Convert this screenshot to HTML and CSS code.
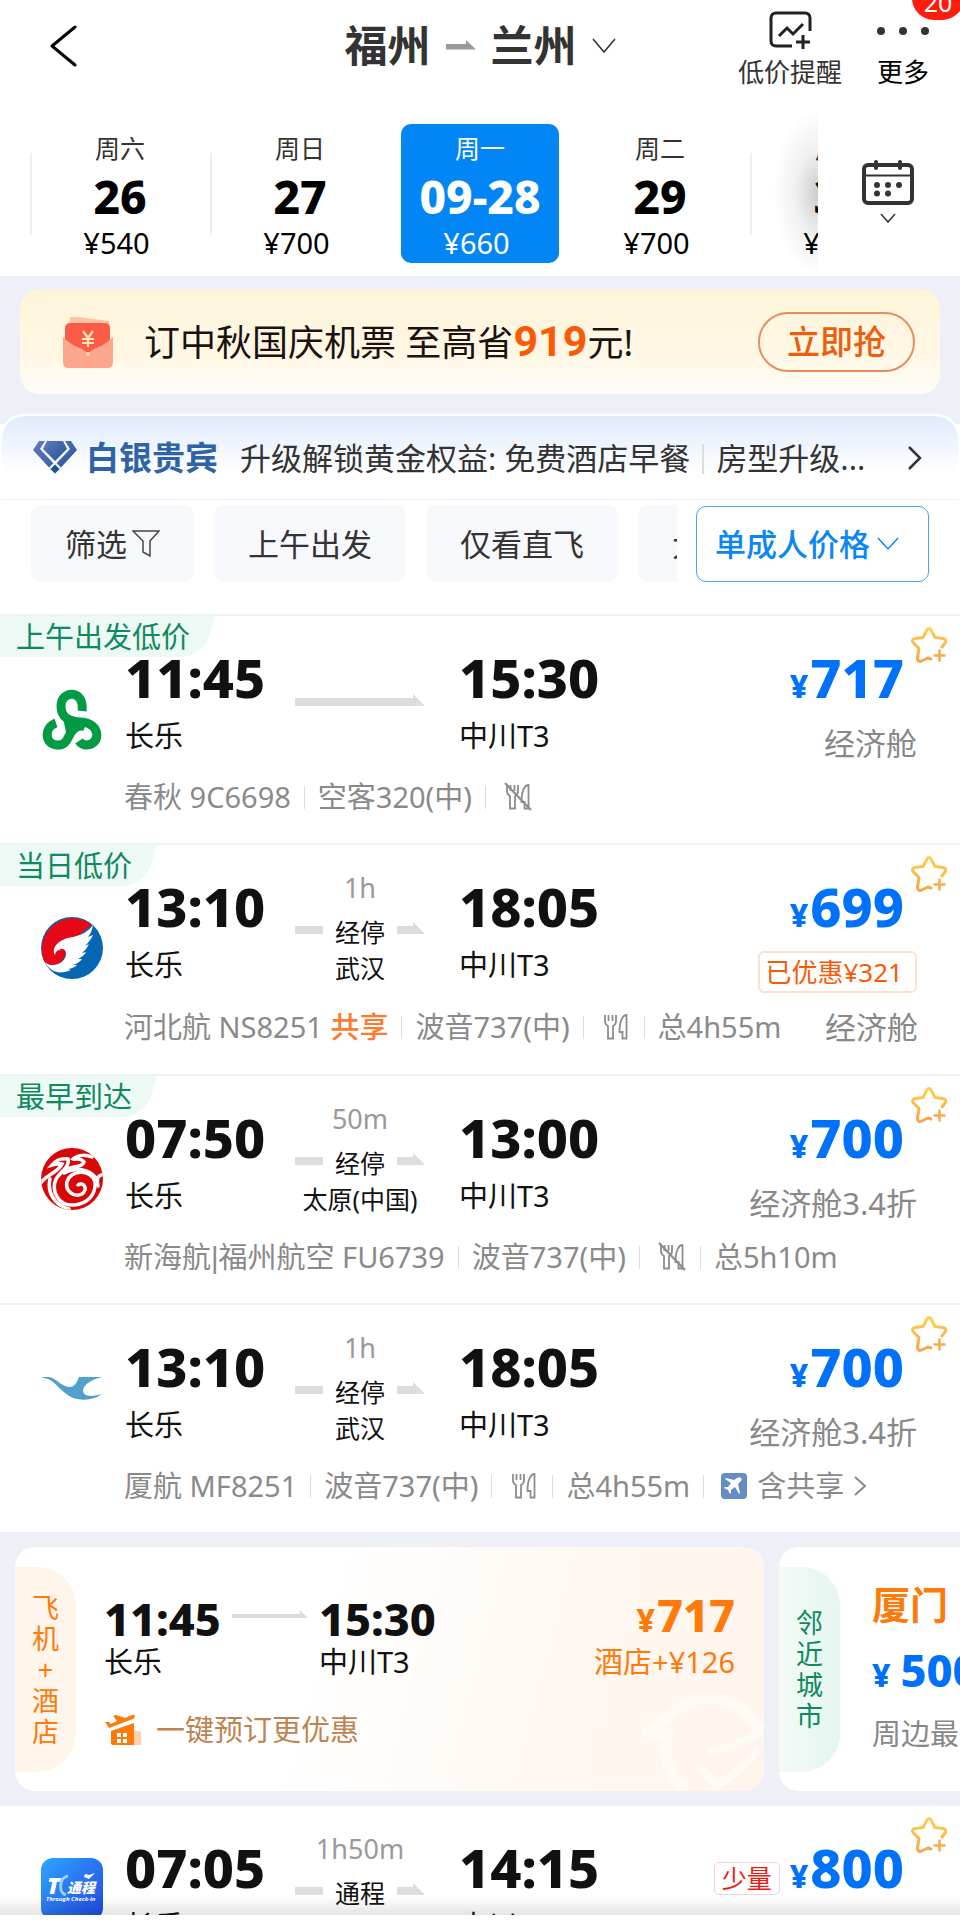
FILE: index.html
```html
<!DOCTYPE html>
<html lang="zh-CN">
<head>
    <meta charset="UTF-8">
    <meta name="viewport" content="width=device-width, initial-scale=1.0">
    <title>福州 - 兰州 机票</title>
    <link rel="stylesheet" href="styles.css">
</head>
<body>
    <!-- 公用图标 -->
    <svg class="symbols" aria-hidden="true">
        <defs>
            <linearGradient id="gold" x1="0" y1="0" x2="0" y2="1">
                <stop offset="0" stop-color="#fdd04f"/>
                <stop offset="1" stop-color="#f9a548"/>
            </linearGradient>
        </defs>
        <symbol id="icon-star" viewBox="0 0 36 36">
            <path d="M31 20l3-4c2-3 0-4-2-4.500l-8-1L20 3c-1-2-3-2-4 0l-4 7.500-8 1c-3 .5-3 3-1.500 4.500L8 21.500 6.500 31c0 3 2 4 4 3l6.500-3 3 1" fill="none" stroke="url(#gold)" stroke-width="3" stroke-linecap="round" stroke-linejoin="round"/>
            <path d="M28.500 22.500v12M22.500 28.500h12" stroke="#f9ab48" stroke-width="2.500"/>
        </symbol>
        <symbol id="icon-meal" viewBox="0 0 34 34">
            <path d="M8 5v6c0 3 1 4 3 5v12.500h5V16c2-1 3-2 3-5V5M11.500 5v6M15.500 5v6" fill="none" stroke="#8d8d8d" stroke-width="1.800"/>
            <path d="M29.500 28.500V5c-3 0-7 4-7 17h3v6.500z" fill="none" stroke="#8d8d8d" stroke-width="1.800"/>
        </symbol>
        <symbol id="icon-no-meal" viewBox="0 0 34 34">
            <use href="#icon-meal"/>
            <path d="M6 3l26 27" stroke="#8d8d8d" stroke-width="2.200"/>
        </symbol>
    </svg>

    <!-- 顶部航线 -->
    <header class="header">
        <button class="back" aria-label="返回">
            <svg width="28" height="44" viewBox="0 0 28 44" fill="none" stroke="#000" stroke-width="3" stroke-linecap="round" stroke-linejoin="round"><path d="M25 3L2 22l23 19"/></svg>
        </button>
        <h1 class="route">
            <button class="route-btn">
                <span>福州</span>
                <svg width="30" height="12" viewBox="0 0 30 12"><path d="M0 4h20V0l10 9.500H0z" fill="#9a9a9a"/></svg>
                <span>兰州</span>
                <svg width="24" height="16" viewBox="0 0 24 16" fill="none" stroke="#333" stroke-width="1.600"><path d="M1 1l11 13L23 1"/></svg>
            </button>
        </h1>
        <div class="actions">
            <button class="action">
                <svg width="44" height="40" viewBox="0 0 44 40" fill="none" stroke="#222" stroke-width="3">
                    <path d="M24 35H8c-3 0-5-2-5-5V7c0-3 2-5 5-5h29c3 0 5 2 5 5v13"/>
                    <path d="M11 25l8-8 6 6 10-10"/>
                    <path d="M35 24v14M28 31h14"/>
                </svg>
                <span>低价提醒</span>
            </button>
            <button class="action more">
                <svg width="54" height="40" viewBox="0 0 54 40" fill="#333"><circle cx="5" cy="20" r="4"/><circle cx="27" cy="20" r="4"/><circle cx="49" cy="20" r="4"/></svg>
                <span>更多</span>
                <em class="badge">20</em>
            </button>
        </div>
    </header>

    <!-- 日期选择 -->
    <nav class="dates">
        <div class="date-list">
            <button class="date"><span>周六</span><b>26</b><span class="fare">¥540</span></button>
            <button class="date"><span>周日</span><b>27</b><span class="fare">¥700</span></button>
            <button class="date active"><span>周一</span><b>09-28</b><span class="fare">¥660</span></button>
            <button class="date no-line"><span>周二</span><b>29</b><span class="fare">¥700</span></button>
            <button class="date"><span>周三</span><b>30</b><span class="fare">¥700</span></button>
        </div>
        <button class="calendar" aria-label="日历">
            <svg width="52" height="64" viewBox="0 0 52 64" fill="none" stroke="#333">
                <rect x="2" y="5" width="48" height="38" rx="4" stroke-width="4"/>
                <path d="M2 15.500h48" stroke-width="2"/>
                <path d="M14 2v6M38 2v6" stroke-width="4" stroke-linecap="round"/>
                <g fill="#333" stroke="none"><circle cx="15" cy="25" r="3"/><circle cx="26" cy="25" r="3"/><circle cx="37" cy="25" r="3"/><circle cx="15" cy="33.500" r="3"/><circle cx="26" cy="33.500" r="3"/></g>
                <path d="M19 54l7 8 7-8" stroke-width="1.500"/>
            </svg>
        </button>
    </nav>

    <!-- 活动横幅 -->
    <section class="promo">
        <div class="banner">
            <svg class="envelope" width="54" height="54" viewBox="0 0 54 54">
                <path d="M9 2h8l31 4v12H8z" fill="#fbc2a8"/>
                <rect x="4" y="8" width="45" height="36" rx="5" fill="#fb5b47"/>
                <path d="M2 22q25 25 50 0v25q0 6-6 6H8q-6 0-6-6z" fill="#fca68e"/>
                <path d="M4 23l23 15 22-15" fill="#fb5b47"/>
                <circle cx="27" cy="39" r="2" fill="#ffd9a0"/>
                <path d="M22 16l5 7 5-7M27 23v9M21 24h12M21 28h12" fill="none" stroke="#ffe7b5" stroke-width="2.200"/>
            </svg>
            <p class="banner-text">订中秋国庆机票 至高省<b>919</b>元!</p>
            <button class="grab">立即抢</button>
        </div>
    </section>

    <!-- 会员权益 -->
    <a class="member" href="#">
        <svg width="46" height="36" viewBox="0 0 46 36">
            <defs><linearGradient id="gem" x1="0" y1="0" x2="1" y2="1"><stop offset="0" stop-color="#6679c4"/><stop offset="1" stop-color="#22518f"/></linearGradient></defs>
            <path d="M15 1h16l4 8-12 12L11 9z" fill="url(#gem)"/>
            <path d="M7 1h6L8 9l15 16L38 9l-5-8h6l6 9-22 24L1 10z" fill="url(#gem)"/>
            <path d="M23 23l6 6-6 6-6-6z" fill="#22518f" stroke="#f2f7ff" stroke-width="2"/>
        </svg>
        <strong>白银贵宾</strong>
        <span class="member-text">升级解锁黄金权益: 免费酒店早餐<i></i>房型升级...</span>
        <svg width="14" height="24" viewBox="0 0 14 24" fill="none" stroke="#333" stroke-width="2.500"><path d="M1 1l11 11L1 23"/></svg>
    </a>

    <!-- 筛选 -->
    <div class="filters">
        <div class="filter-list">
            <button class="filter">筛选
                <svg width="28" height="28" viewBox="0 0 28 28" fill="none" stroke="#444" stroke-width="1.500"><path d="M1 1h26l-9 10v15l-7-4V11z"/></svg>
            </button>
            <button class="filter">上午出发</button>
            <button class="filter">仅看直飞</button>
            <button class="filter">大飞机</button>
        </div>
        <label class="sort">
            <select aria-label="价格类型">
                <option>单成人价格</option>
                <option>单儿童价格</option>
            </select>
            <svg width="22" height="14" viewBox="0 0 22 14" fill="none" stroke="#0b86f5" stroke-width="1.500"><path d="M1 1l10 11L21 1"/></svg>
        </label>
    </div>

    <!-- 航班列表 -->
    <main>
        <article class="flight tagged">
            <span class="tag">上午出发低价</span>
            <button class="star" aria-label="收藏"><svg width="36" height="36"><use href="#icon-star"/></svg></button>
            <div class="flight-main">
                <svg class="logo" viewBox="0 0 62 62" fill="none" stroke="#029b44" stroke-width="9">
                    <path d="M41 23C44 1 20 2 20 18c0 12 8 15 20 16 20 1 20 22 6 23-3 0-6-1-8-4"/>
                    <path d="M15 35C3 39 3 56 16 57c13 1 10-14 20-18 4-2 6-1 8 0"/>
                    <path d="M22 30l16 7-12 12z" fill="#029b44" stroke="none"/>
                </svg>
                <div class="stop"><time>11:45</time><p>长乐</p></div>
                <div class="track"><div class="track-line"><i class="arrow"></i></div></div>
                <div class="stop arrive"><time>15:30</time><p>中川T3</p></div>
                <div class="price-box"><p class="price"><small>¥</small>717</p><p class="cabin">经济舱</p></div>
            </div>
            <div class="info">
                <span>春秋 9C6698</span><i></i><span>空客320(中)</span><i></i><svg width="34" height="34"><use href="#icon-no-meal"/></svg>
            </div>
        </article>

        <article class="flight tagged">
            <span class="tag">当日低价</span>
            <button class="star" aria-label="收藏"><svg width="36" height="36"><use href="#icon-star"/></svg></button>
            <div class="flight-main">
                <svg class="logo" viewBox="0 0 62 62">
                    <circle cx="31" cy="31" r="31" fill="#0566b3"/>
                    <path d="M51 8A31 31 0 0 0 4 46Q10 50 20 46L30 24z" fill="#e60817"/>
                    <path d="M52 8Q46 17 32 20C17 22 10 31 14 38c3 5 10 2 8-3-1-3-5-2-4 0-1-4 6-5 7 1 1 8-12 17-21 9 5 10 15 13 26 8l-3-1q6-1 9-4l-4 0q6-2 9-6l-4 0q6-3 8-7l-4 1q5-4 7-9l-4 2q6-6 8-11l-5 2q4-5 5-12z" fill="#fff"/>
                    <circle cx="19" cy="38" r="5" fill="#e60817"/>
                </svg>
                <div class="stop"><time>13:10</time><p>长乐</p></div>
                <div class="track"><span class="wait">1h</span><div class="track-line"><i class="dash"></i><span>经停</span><i class="arrow"></i></div><span>武汉</span></div>
                <div class="stop arrive"><time>18:05</time><p>中川T3</p></div>
                <div class="price-box"><p class="price"><small>¥</small>699</p><p class="discount">已优惠¥321</p></div>
            </div>
            <div class="info">
                <span>河北航 NS8251 <b>共享</b></span><i></i><span>波音737(中)</span><i></i><svg width="34" height="34"><use href="#icon-meal"/></svg><i></i><span>总4h55m</span>
                <span class="cabin">经济舱</span>
            </div>
        </article>

        <article class="flight tagged">
            <span class="tag">最早到达</span>
            <button class="star" aria-label="收藏"><svg width="36" height="36"><use href="#icon-star"/></svg></button>
            <div class="flight-main">
                <svg class="logo" viewBox="0 0 62 62">
                    <defs><clipPath id="disc"><circle cx="31" cy="31" r="31"/></clipPath></defs>
                    <circle cx="31" cy="31" r="31" fill="#d90808"/>
                    <g fill="none" stroke="#fff" stroke-width="3.500" stroke-linecap="round" clip-path="url(#disc)">
                        <path d="M-1 36C5 26 17 25 21 16c-4-1-7 0-10 1 5-6 11-7 16-6 2 8-8 13-12 20-5 12 2 27 18 26 14-1 22-11 21-23-3-13-25-13-28 0-2 9 7 16 15 12 7-5 1-13-4-9"/>
                        <path d="M23 24C26 17 41 21 43 14c-4-5-9-2-11-3 5-5 14-4 19-2M9 31C6 44 13 57 28 61M63 26c-8 2-7 6-6 12M23 25c12-6 24-4 31 4"/>
                    </g>
                </svg>
                <div class="stop"><time>07:50</time><p>长乐</p></div>
                <div class="track"><span class="wait">50m</span><div class="track-line"><i class="dash"></i><span>经停</span><i class="arrow"></i></div><span>太原(中国)</span></div>
                <div class="stop arrive"><time>13:00</time><p>中川T3</p></div>
                <div class="price-box"><p class="price"><small>¥</small>700</p><p class="cabin">经济舱3.4折</p></div>
            </div>
            <div class="info">
                <span>新海航<span class="pipe">|</span>福州航空 FU6739</span><i></i><span>波音737(中)</span><i></i><svg width="34" height="34"><use href="#icon-no-meal"/></svg><i></i><span>总5h10m</span>
            </div>
        </article>

        <article class="flight">
            <button class="star" aria-label="收藏"><svg width="36" height="36"><use href="#icon-star"/></svg></button>
            <div class="flight-main">
                <svg class="logo" viewBox="0 0 62 62">
                    <path d="M0 20h8c7 1 13 10 20 10 6 0 8-5 10-10h23c-9 2-19 7-19 14 1 7 12 5 19 3-9 7-22 7-31 3C20 35 14 24 7 22z" fill="#519fcb"/>
                </svg>
                <div class="stop"><time>13:10</time><p>长乐</p></div>
                <div class="track"><span class="wait">1h</span><div class="track-line"><i class="dash"></i><span>经停</span><i class="arrow"></i></div><span>武汉</span></div>
                <div class="stop arrive"><time>18:05</time><p>中川T3</p></div>
                <div class="price-box"><p class="price"><small>¥</small>700</p><p class="cabin">经济舱3.4折</p></div>
            </div>
            <div class="info">
                <span>厦航 MF8251</span><i></i><span>波音737(中)</span><i></i><svg width="34" height="34"><use href="#icon-meal"/></svg><i></i><span>总4h55m</span><i></i>
                <a class="share" href="#">
                    <svg width="26" height="26" viewBox="0 0 26 26"><rect width="26" height="26" rx="4" fill="#648dc4"/><path d="M20 5c1 1 1 2-1 4l-2 2 2 9-1 1-4-7-4 3v3l-1 1-2-4-4-2 1-1h3l3-4-6-4 1-1 8 2 3-2c2-1 3-1 4 0z" fill="#fff"/></svg>
                    <span>含共享</span>
                    <svg width="13" height="20" viewBox="0 0 13 20" fill="none" stroke="#888" stroke-width="2"><path d="M1 1l10 9-10 9"/></svg>
                </a>
            </div>
        </article>

        <!-- 推荐卡片 -->
        <section class="cards">
            <article class="card hotel-card">
                <h2 class="side"><span>飞机+酒店</span></h2>
                <div class="card-body">
                    <div class="card-flight">
                        <div><time>11:45</time><p>长乐</p></div>
                        <i class="arrow thin"></i>
                        <div><time>15:30</time><p>中川T3</p></div>
                        <div class="card-price"><p class="sum"><small>¥</small>717</p><p>酒店+¥126</p></div>
                    </div>
                    <p class="slogan">
                        <svg width="38" height="32" viewBox="0 0 38 32">
                            <path d="M30 16l7 2v13h-7z" fill="#fccfae"/>
                            <path d="M7 17l23-8v22H9q-2 0-2-2z" fill="#fd7a0b"/>
                            <path d="M1 8l4 0 2 2 6-3-4-5 3-1 9 3 7-3c3-1 4 2 1 4L5 14z" fill="#fd7a0b"/>
                            <path d="M13 19h4v4h-4zM19 19h4v4h-4zM13 25h4v4h-4zM19 25h4v4h-4z" fill="#fff"/>
                        </svg>
                        一键预订更优惠
                    </p>
                </div>
                <svg class="mark" width="122" height="100" viewBox="0 0 122 100" fill="none" stroke="#fffaf4" stroke-width="12">
                    <path d="M44 98C24 80 20 62 26 44L6 41C24 32 38 7 66 7c22 0 42 12 52 34"/>
                    <path d="M56 74l18 20c16-8 32-22 44-36M66 62c20-6 36-12 54-20" stroke-width="8"/>
                </svg>
            </article>
            <article class="card city-card">
                <h2 class="side green"><span>邻近城市</span></h2>
                <div class="card-body">
                    <h3>厦门</h3>
                    <p class="sum blue"><small>¥</small>500</p>
                    <p class="near">周边最低价</p>
                </div>
            </article>
        </section>

        <article class="flight">
            <button class="star" aria-label="收藏"><svg width="36" height="36"><use href="#icon-star"/></svg></button>
            <div class="flight-main">
                <svg class="logo" viewBox="0 0 62 62">
                    <defs><linearGradient id="app" x1="0" y1="0" x2="1" y2="1"><stop offset="0" stop-color="#2fa5ff"/><stop offset="1" stop-color="#2246e0"/></linearGradient></defs>
                    <rect width="62" height="62" rx="12" fill="url(#app)"/>
                    <text x="6" y="36" class="app-t">T</text>
                    <path d="M27 18c-9 1-10 17-2 19" fill="none" stroke="#9cd2ff" stroke-width="3"/>
                    <text x="26" y="35" class="app-name">通程</text>
                    <path d="M44 16l4 1 6-2-6 6-5-2z" fill="#fff"/>
                    <text x="5" y="43" class="app-sub">Through Check-in</text>
                </svg>
                <div class="stop"><time>07:05</time><p>长乐</p></div>
                <div class="track"><span class="wait">1h50m</span><div class="track-line"><i class="dash"></i><span>通程</span><i class="arrow"></i></div></div>
                <div class="stop arrive"><time>14:15</time><p>中川T3</p></div>
                <div class="price-box"><p class="price"><span class="few">少量</span><small>¥</small>800</p></div>
            </div>
        </article>
    </main>
    <div class="bottom-fade"></div>
</body>
</html>
```
FILE: styles.css
```css
/* 基础样式 */
* {
    box-sizing: border-box;
}

body {
    margin: 0;
    background: #fff;
    color: #111;
    font-family: "Noto Sans", "Noto Sans CJK SC", sans-serif;
    font-size: 29px;
    line-height: 36px;
    overflow: hidden;
}

h1, h2, h3, p {
    margin: 0;
    font-weight: normal;
}

button {
    margin: 0;
    padding: 0;
    border: none;
    background: none;
    color: inherit;
    font: inherit;
    cursor: pointer;
}

a {
    color: inherit;
    text-decoration: none;
}

svg {
    flex: none;
    display: block;
}

i, em {
    font-style: normal;
}

.symbols {
    position: absolute;
    width: 0;
    height: 0;
}

/* 顶部 */
.header {
    display: grid;
    grid-template-columns: 1fr auto 1fr;
    align-items: start;
    height: 110px;
    padding: 0 30px;
}

.back {
    justify-self: start;
    margin: 24px 0 0 20px;
}

.route-btn {
    display: flex;
    align-items: center;
    gap: 15px;
    margin-top: 16px;
    color: #333;
    font-size: 43px;
    font-weight: bold;
    line-height: 60px;
}

.actions {
    display: flex;
    justify-content: flex-end;
    gap: 34px;
    padding-top: 11px;
}

.action {
    display: flex;
    flex-direction: column;
    align-items: center;
    color: #333;
    font-size: 26px;
    line-height: 30px;
    gap: 6px;
}

.more {
    position: relative;
    color: #000;
}

.badge {
    position: absolute;
    top: -35px;
    right: -34px;
    width: 52px;
    height: 44px;
    border-radius: 22px;
    background: #ff1c0c;
    color: #fff;
    font-size: 25px;
    line-height: 52px;
}

/* 日期 */
.dates {
    display: flex;
    height: 166px;
}

.date-list {
    position: relative;
    display: flex;
    flex: 1;
    padding: 14px 0 13px 30px;
    overflow: hidden;
}

.date-list::after {
    content: '';
    position: absolute;
    top: 0;
    right: 0;
    width: 45px;
    height: 100%;
    background: radial-gradient(45px 85px at 100% 50%, rgba(0, 0, 0, 0.2), rgba(0, 0, 0, 0.06) 50%, transparent);
}

.date {
    display: flex;
    flex: 0 0 180px;
    flex-direction: column;
    align-items: center;
    gap: 3px;
    padding-top: 7px;
    background: linear-gradient(#eee, #eee) 0 29px / 2px 82px no-repeat;
    color: #333;
    font-size: 25px;
    line-height: 34px;
}

.date b {
    color: #000;
    font-size: 46px;
    font-weight: 800;
    line-height: 56px;
}

.date .fare {
    padding-right: 7px;
    color: #000;
    font-size: 29px;
    line-height: 32px;
}

.date.no-line {
    background: none;
}

.date.active {
    flex-basis: 158px;
    margin: 0 11px;
    border-radius: 10px;
    background: #0286f6;
    color: #fff;
}

.date.active b,
.date.active .fare {
    color: #fff;
}

.calendar {
    flex: 0 0 142px;
    display: flex;
    justify-content: center;
    align-items: flex-start;
    padding: 50px 2px 0 0;
}

/* 横幅 */
.promo {
    padding: 13px 20px 30px;
    background: #edf1f7;
}

.banner {
    display: flex;
    align-items: center;
    height: 105px;
    padding: 0 25px 0 41px;
    border-radius: 20px;
    background: linear-gradient(#fdf4da, #fff7e3 60%, #fffdf8);
}

.banner-text {
    display: flex;
    align-items: baseline;
    flex: 1;
    margin-left: 29px;
    color: #1a1210;
    font-size: 36px;
    line-height: 56px;
    white-space: pre;
}

.banner-text b {
    color: #fa5a05;
    font-family: Roboto, "Liberation Sans", sans-serif;
    font-size: 43px;
}

.grab {
    width: 157px;
    height: 60px;
    border: 2px solid #e58d5c;
    border-radius: 30px;
    color: #ee5d0c;
    font-size: 33px;
    font-weight: 500;
}

/* 会员 */
.member {
    position: relative;
    display: flex;
    align-items: center;
    height: 86px;
    margin-top: -10px;
    padding: 0 36px 0 30px;
    border: 2px solid #fff;
    border-bottom: 1px solid #eef0f2;
    border-radius: 24px 24px 0 0;
    background: linear-gradient(#dfebfd, #fff 70%) padding-box, #fff;
    color: #333;
    font-size: 31px;
}

.member strong {
    margin: 0 22px 0 8px;
    color: #2f63a8;
    font-size: 33px;
}

.member-text {
    flex: 1;
    white-space: nowrap;
}

.member-text i {
    display: inline-block;
    width: 2px;
    height: 30px;
    margin: 0 12px;
    background: #ddd;
    vertical-align: -4px;
}

/* 筛选 */
.filters {
    display: flex;
    padding: 5px 31px 32px;
    color: #333;
    font-size: 31px;
}

.filter-list {
    display: flex;
    flex: 1;
    gap: 20px;
    min-width: 0;
    overflow: hidden;
}

.filter {
    display: flex;
    flex: none;
    align-items: center;
    gap: 5px;
    height: 77px;
    padding: 0 34px;
    border-radius: 10px;
    background: #f7f8fb;
}

.sort {
    display: flex;
    align-items: center;
    gap: 7px;
    margin: 1px 0 0 19px;
    padding: 0 29px 0 18px;
    border: 1px solid #4aa3ec;
    border-radius: 10px;
    color: #0b86f5;
}

.sort select {
    padding: 0;
    border: none;
    background: none;
    color: inherit;
    font: inherit;
    font-weight: 500;
    appearance: none;
}

/* 航班 */
.flight {
    position: relative;
    padding: 28px 0 26px;
    border-top: 2px solid #eef1f6;
}

.tag {
    position: absolute;
    top: 0;
    left: 0;
    z-index: 0;
    height: 41px;
    padding: 0 25px 0 16px;
    color: #0f8a5f;
    line-height: 42px;
    overflow: hidden;
}

.tag::before {
    content: '';
    position: absolute;
    inset: 0 6px 0 -20px;
    z-index: -1;
    border-radius: 0 0 22px 0;
    background: #edf9f5;
    transform: skewX(-15deg);
}

.star {
    position: absolute;
    top: 11px;
    right: 13px;
}

.flight-main {
    display: grid;
    grid-template-columns: 125px 170px 130px 1fr auto;
    height: 120px;
}

.logo {
    width: 62px;
    height: 62px;
    margin: 24px 0 0 41px;
}

.tagged .logo {
    margin-top: 44px;
}

.stop {
    display: flex;
    flex-direction: column;
    gap: 14px;
    padding-top: 6px;
}

.arrive {
    padding-left: 34px;
}

time {
    font-size: 54px;
    font-weight: 800;
    line-height: 54px;
}

.track {
    display: flex;
    flex-direction: column;
    align-items: center;
    font-size: 25px;
    white-space: nowrap;
}

.wait {
    height: 41px;
    color: #999;
    font-size: 27px;
    line-height: 29px;
}

.track-line {
    display: flex;
    align-items: center;
    align-self: stretch;
    gap: 12px;
    height: 36px;
}

.track-line:first-child {
    margin-top: 42px;
}

.arrow,
.dash {
    flex: 1;
    height: 12px;
    margin-bottom: 8px;
    background: #ddd;
    clip-path: polygon(0 4px, 100% 4px, 100% 100%, 0 100%);
}

.arrow {
    clip-path: polygon(0 4px, calc(100% - 12px) 4px, calc(100% - 12px) 0, 100% 100%, 0 100%);
}

.price-box {
    display: flex;
    flex-direction: column;
    align-items: flex-end;
    gap: 18px;
    padding: 6px 43px 0 0;
}

.price {
    display: flex;
    align-items: baseline;
    gap: 2px;
    margin-right: 13px;
    color: #0071fa;
    font-size: 54px;
    font-weight: 800;
    line-height: 54px;
}

.price small,
.sum small {
    font-size: 32px;
    line-height: 32px;
}

.cabin {
    color: #888;
    font-size: 31px;
    line-height: 42px;
}

.discount {
    padding: 0 12px 0 6px;
    border: 2px solid #fde0cb;
    border-radius: 6px;
    color: #fa5a05;
    font-size: 26px;
    line-height: 38px;
}

.few {
    margin-right: 8px;
    padding: 0 7px;
    border: 1px solid #f9cfcc;
    border-radius: 5px;
    color: #ee1a10;
    font-size: 25px;
    font-weight: normal;
    line-height: 31px;
}

.info {
    display: flex;
    align-items: center;
    gap: 13px;
    min-height: 40px;
    margin-top: 13px;
    padding: 0 42px 0 124px;
    color: #8a8a8a;
    white-space: nowrap;
}

.info > i {
    width: 1px;
    height: 23px;
    background: #ddd;
}

.info b {
    color: #ff7a2e;
    font-weight: 500;
}

.info .cabin {
    margin-left: auto;
}

.pipe {
    font-family: "Liberation Sans", sans-serif;
}

.share {
    display: flex;
    align-items: center;
    gap: 10px;
    padding-left: 4px;
}

/* 推荐卡片 */
.cards {
    display: flex;
    gap: 15px;
    padding: 15px 15px 13px;
    background: #edf1f7;
    overflow: hidden;
}

.card {
    position: relative;
    display: flex;
    flex: 0 0 749px;
    align-items: center;
    height: 244px;
    border-radius: 20px;
    background: #fff;
    overflow: hidden;
}

.hotel-card {
    background: linear-gradient(105deg, #fff 40%, #fff8f2 70%, #fff4ec);
}

.side {
    display: flex;
    align-items: center;
    justify-content: center;
    width: 61px;
    height: 205px;
    border-radius: 0 38px 38px 0;
    background: #fff5ea;
    color: #fd7a0b;
    font-size: 27px;
    line-height: 31px;
    text-align: center;
}

.side span {
    width: 28px;
    line-break: anywhere;
}

.side.green {
    background: linear-gradient(90deg, #f2faf6, #e5f6ef);
    color: #0f8a5f;
}

.card-body {
    position: relative;
    z-index: 1;
    flex: 1;
    align-self: stretch;
    padding: 47px 29px 0 28px;
}

.card-flight {
    display: flex;
    align-items: flex-start;
}

.card time,
.sum {
    display: block;
    font-size: 45px;
    font-weight: 800;
    line-height: 50px;
}

.arrow.thin {
    flex: 0 0 76px;
    margin: 16px 11px 0;
    height: 8px;
    clip-path: polygon(0 4px, calc(100% - 8px) 4px, calc(100% - 8px) 0, 100% 100%, 0 100%);
}

.card-price {
    margin-left: auto;
    color: #fd7a0b;
    text-align: right;
}

.card-price .sum {
    margin-bottom: 8px;
    line-height: 42px;
}

.sum small {
    margin-right: 2px;
}

.slogan {
    display: flex;
    align-items: center;
    gap: 14px;
    margin-top: 32px;
    color: #bf8350;
}

.mark {
    position: absolute;
    right: 0;
    bottom: 0;
}

.city-card .card-body {
    padding-top: 32px;
    padding-left: 32px;
}

.city-card h3 {
    color: #fd7a0b;
    font-size: 38px;
    font-weight: bold;
    line-height: 50px;
}

.sum.blue {
    margin: 16px 0 21px;
    color: #0071fa;
}

.sum.blue small {
    margin-right: 10px;
}

.near {
    color: #888;
}

/* 图标文字 */
.app-t {
    fill: #fff;
    font-size: 23px;
    font-style: italic;
    font-weight: 900;
}

.app-name {
    fill: #fff;
    font-size: 14px;
    font-style: italic;
    font-weight: 900;
}

.app-sub {
    fill: #fff;
    font-size: 6px;
    font-style: italic;
    font-weight: bold;
}

.bottom-fade {
    position: fixed;
    right: 0;
    bottom: 0;
    left: 0;
    height: 24px;
    background: linear-gradient(rgba(0, 0, 0, 0), rgba(0, 0, 0, 0.1) 79%, #fff 80%);
}
```
